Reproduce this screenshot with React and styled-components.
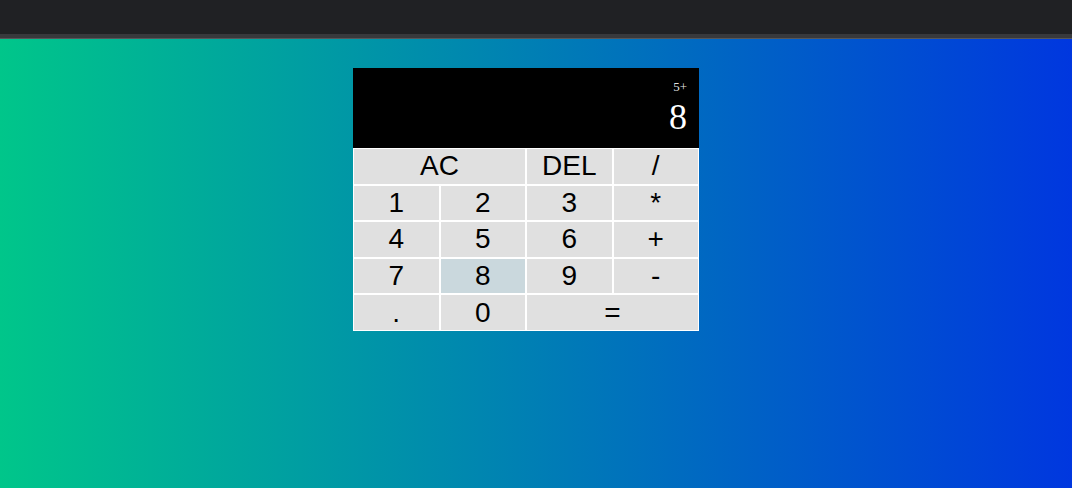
import React from 'react';
import styled, { createGlobalStyle } from 'styled-components';

const GlobalStyle = createGlobalStyle`
  *, *::before, *::after {
    box-sizing: border-box;
  }
  body {
    margin: 0;
    font-family: "Liberation Sans", Arial, sans-serif;
  }
`;

const Page = styled.div`
  display: flex;
  flex-direction: column;
  height: 100vh;
`;

const TopBar = styled.div`
  height: 38px;
  flex-shrink: 0;
  background: #202124;
  border-bottom: 4px solid #38393c;
  position: relative;
  &::after {
    content: '';
    position: absolute;
    left: 0;
    right: 0;
    bottom: -5px;
    height: 1px;
    background: #56575a;
  }
`;

const Main = styled.main`
  flex: 1;
  display: flex;
  justify-content: center;
  align-items: flex-start;
  padding: 30px 20px 0 0;
  background: linear-gradient(to right, #00c68a, #0037df);
`;

const CalculatorGrid = styled.div`
  display: grid;
  width: 346px;
  grid-template-columns: repeat(4, 1fr);
  grid-template-rows: 80px repeat(5, 36.6px);
`;

const Output = styled.div`
  grid-column: 1 / -1;
  background: #000;
  display: flex;
  flex-direction: column;
  align-items: flex-end;
  justify-content: space-around;
  padding: 10px 12px 10px 10px;
  font-family: "Liberation Serif", "Times New Roman", serif;
`;

const PreviousOperand = styled.div`
  color: rgba(255, 255, 255, 0.9);
  font-size: 13px;
`;

const CurrentOperand = styled.div`
  color: #fff;
  font-size: 36px;
`;

const Key = styled.button`
  grid-column: span ${({ $span }) => $span || 1};
  border: 1px solid #fff;
  margin: 0;
  padding: 0;
  outline: none;
  cursor: pointer;
  font-family: "Liberation Sans", Arial, sans-serif;
  font-size: 28px;
  color: #000;
  background: ${({ $active }) => ($active ? '#cad8dd' : '#e0e0e0')};
  &:hover {
    background: #cad8dd;
  }
`;

const keys = [
  { label: 'AC', span: 2 },
  { label: 'DEL' },
  { label: '/' },
  { label: '1' },
  { label: '2' },
  { label: '3' },
  { label: '*' },
  { label: '4' },
  { label: '5' },
  { label: '6' },
  { label: '+' },
  { label: '7' },
  { label: '8', active: true },
  { label: '9' },
  { label: '-' },
  { label: '.' },
  { label: '0' },
  { label: '=', span: 2 },
];

export default function App() {
  return (
    <>
      <GlobalStyle />
      <Page>
        <TopBar />
        <Main>
          <CalculatorGrid>
            <Output>
              <PreviousOperand>5+</PreviousOperand>
              <CurrentOperand>8</CurrentOperand>
            </Output>
            {keys.map((k) => (
              <Key key={k.label} $span={k.span} $active={k.active}>
                {k.label}
              </Key>
            ))}
          </CalculatorGrid>
        </Main>
      </Page>
    </>
  );
}
